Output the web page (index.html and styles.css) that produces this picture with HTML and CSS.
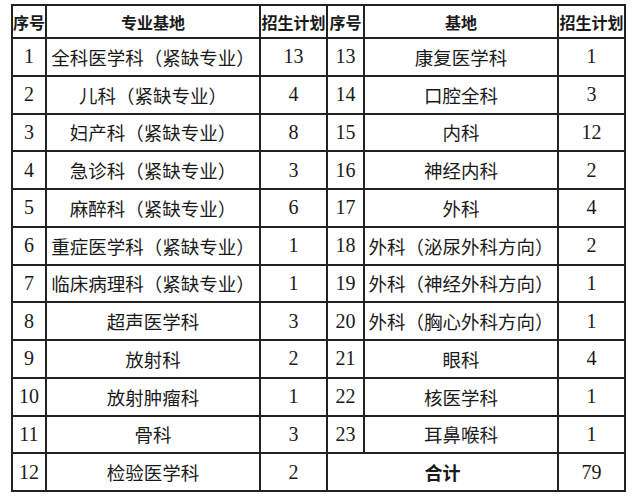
FILE: index.html
```html
<!DOCTYPE html>
<html lang="zh">
<head>
<meta charset="utf-8">
<link rel="stylesheet" href="styles.css">
</head>
<body>
<div class="wrap">
<table class="plan">
  <colgroup>
    <col class="c-no"><col class="c-name"><col class="c-num">
    <col class="c-no2"><col class="c-name2"><col class="c-num">
  </colgroup>
  <thead>
    <tr>
      <th>序号</th><th>专业基地</th><th>招生计划</th>
      <th>序号</th><th>基地</th><th>招生计划</th>
    </tr>
  </thead>
  <tbody>
    <tr><td class="n">1</td><td class="t">全科医学科（紧缺专业）</td><td class="n">13</td><td class="n">13</td><td class="t">康复医学科</td><td class="n">1</td></tr>
    <tr><td class="n">2</td><td class="t">儿科（紧缺专业）</td><td class="n">4</td><td class="n">14</td><td class="t">口腔全科</td><td class="n">3</td></tr>
    <tr><td class="n">3</td><td class="t">妇产科（紧缺专业）</td><td class="n">8</td><td class="n">15</td><td class="t">内科</td><td class="n">12</td></tr>
    <tr><td class="n">4</td><td class="t">急诊科（紧缺专业）</td><td class="n">3</td><td class="n">16</td><td class="t">神经内科</td><td class="n">2</td></tr>
    <tr><td class="n">5</td><td class="t">麻醉科（紧缺专业）</td><td class="n">6</td><td class="n">17</td><td class="t">外科</td><td class="n">4</td></tr>
    <tr><td class="n">6</td><td class="t">重症医学科（紧缺专业）</td><td class="n">1</td><td class="n">18</td><td class="t">外科（泌尿外科方向）</td><td class="n">2</td></tr>
    <tr><td class="n">7</td><td class="t">临床病理科（紧缺专业）</td><td class="n">1</td><td class="n">19</td><td class="t">外科（神经外科方向）</td><td class="n">1</td></tr>
    <tr><td class="n">8</td><td class="t">超声医学科</td><td class="n">3</td><td class="n">20</td><td class="t">外科（胸心外科方向）</td><td class="n">1</td></tr>
    <tr><td class="n">9</td><td class="t">放射科</td><td class="n">2</td><td class="n">21</td><td class="t">眼科</td><td class="n">4</td></tr>
    <tr><td class="n">10</td><td class="t">放射肿瘤科</td><td class="n">1</td><td class="n">22</td><td class="t">核医学科</td><td class="n">1</td></tr>
    <tr><td class="n">11</td><td class="t">骨科</td><td class="n">3</td><td class="n">23</td><td class="t">耳鼻喉科</td><td class="n">1</td></tr>
    <tr><td class="n">12</td><td class="t">检验医学科</td><td class="n">2</td><td class="total" colspan="2">合计</td><td class="n">79</td></tr>
  </tbody>
</table>
</div>
</body>
</html>
```
FILE: styles.css
```css
html, body {
  margin: 0;
  padding: 0;
  background: #ffffff;
}
.wrap {
  padding: 4px 0 0 11px;
}
.plan {
  border-collapse: collapse;
  table-layout: fixed;
  width: 613px;
  color: #1a1a1a;
}
.c-no { width: 34px; }
.c-name { width: 214px; }
.c-num { width: 67px; }
.c-no2 { width: 37px; }
.c-name2 { width: 194px; }
.plan th, .plan td {
  border: 2px solid #222;
  padding: 0;
  text-align: center;
  vertical-align: middle;
  white-space: nowrap;
  overflow: hidden;
}
.plan th {
  height: 31px;
  font-family: "Noto Sans CJK SC", sans-serif;
  font-weight: 700;
  font-size: 16px;
  letter-spacing: 0;
}
.plan td {
  height: 35.75px;
}
.plan td.n {
  font-family: "Liberation Serif", "Noto Sans CJK SC", serif;
  font-size: 20px;
}
.plan td.t {
  font-family: "Noto Sans CJK SC", sans-serif;
  font-size: 18.5px;
  font-weight: 400;
}
.plan td.total {
  font-family: "Noto Sans CJK SC", sans-serif;
  font-size: 18px;
  font-weight: 700;
}
```
